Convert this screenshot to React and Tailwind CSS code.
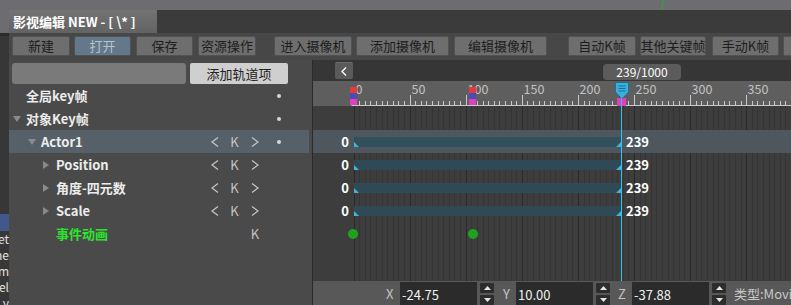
import React from 'react';

const X0 = 40.5;
const K = 1.122;
const fx = (f) => X0 + f * K;
const TL_W = 478;

const toolbar = [
  { t: '新建', c: 'ml-[3px] w-[58px]' },
  { t: '打开', c: 'ml-[4px] w-[57px]', active: true },
  { t: '保存', c: 'ml-[5px] w-[57px]' },
  { t: '资源操作', c: 'ml-[5px] w-[58px]' },
  { t: '进入摄像机', c: 'ml-[18px] w-[78px]' },
  { t: '添加摄像机', c: 'ml-[4px] w-[93px]' },
  { t: '编辑摄像机', c: 'ml-[5px] w-[93px]' },
  { t: '自动K帧', c: 'ml-[21px] w-[68px]' },
  { t: '其他关键帧', c: 'ml-[4px] w-[66px]' },
  { t: '手动K帧', c: 'ml-[6px] w-[67px]' },
  { t: '', c: 'ml-[4px] w-[30px]' },
];

const tree = [
  { label: '全局key帧', pad: 'pl-[4px]', dot: true },
  { label: '对象Key帧', pad: 'pl-[4px]', tri: 'down', dot: true },
  { label: 'Actor1', pad: 'pl-[19px]', tri: 'down', ctrl: true, dot: true, hl: true },
  { label: 'Position', pad: 'pl-[34px]', tri: 'right', ctrl: true },
  { label: '角度-四元数', pad: 'pl-[34px]', tri: 'right', ctrl: true },
  { label: 'Scale', pad: 'pl-[34px]', tri: 'right', ctrl: true },
  { label: '事件动画', pad: 'pl-[34px]', green: true, kOnly: true },
];

const Tri = ({ dir }) =>
  dir === 'down' ? (
    <svg width="8" height="6" viewBox="0 0 8 6"><polygon points="0,0 8,0 4,6" fill="#8a8a8a" /></svg>
  ) : (
    <svg width="6" height="8" viewBox="0 0 6 8"><polygon points="0,0 6,4 0,8" fill="#8a8a8a" /></svg>
  );

const Chevron = ({ left }) => (
  <svg width="8" height="10" viewBox="0 0 8 10">
    <polyline
      points={left ? '7,0.5 1,5 7,9.5' : '1,0.5 7,5 1,9.5'}
      fill="none"
      stroke="#c6c6c6"
      strokeWidth="1.2"
    />
  </svg>
);

const TreeRow = ({ r }) => (
  <div className={`flex h-[23px] w-[300px] items-center ${r.hl ? 'bg-[#566068]' : ''}`}>
    <div className={`flex w-[196px] items-center ${r.pad}`}>
      <span className="flex w-[13px] items-center">{r.tri && <Tri dir={r.tri} />}</span>
      <span className={`text-[13px] font-semibold ${r.green ? 'text-[#2ee32e]' : 'text-[#ececec]'}`}>{r.label}</span>
    </div>
    <span className="flex w-[20px] justify-center">{r.ctrl && <Chevron left />}</span>
    <span className="w-[19px] text-center text-[13px] text-[#c4c4c4]">{r.ctrl ? 'K' : ''}</span>
    <span className="flex w-[22px] justify-center text-[13px] text-[#c4c4c4]">
      {r.ctrl ? <Chevron /> : r.kOnly ? 'K' : ''}
    </span>
    <span className="flex w-[25px] justify-center">
      {r.dot && <span className="h-[4px] w-[4px] rounded-full bg-[#d6d6d6]" />}
    </span>
  </div>
);

const Ruler = () => {
  const ticks = [];
  const labels = [];
  for (let f = 0; fx(f) < TL_W; f += 5) {
    const x = Math.round(fx(f)) + 0.5;
    const major = f % 50 === 0;
    ticks.push(<line key={f} x1={x} x2={x} y1={major ? 14 : 20} y2={24} stroke="#c9c9c9" strokeWidth="1" />);
    if (major)
      labels.push(
        <text key={'l' + f} x={x + 1} y={13} fontSize="12.5" fill="#c2c2c2" fontFamily="Noto Sans CJK SC, sans-serif">{f}</text>
      );
  }
  const marker = (x, key) => (
    <g key={key}>
      <rect x={x} y={6} width={7} height={6} fill="#e23b3b" />
      <rect x={x} y={12} width={7} height={6} fill="#4a4cb6" />
      <rect x={x} y={18} width={7} height={6} fill="#e23fbf" />
    </g>
  );
  return (
    <svg width={TL_W} height="25" className="block">
      <rect width={TL_W} height="25" fill="#5e5e5e" />
      {labels}
      <line x1={fx(0) - 2} x2={TL_W} y1={24.5} y2={24.5} stroke="#c9c9c9" />
      {ticks}
      {marker(37, 'a')}
      {marker(156, 'b')}
      <rect x={304} y={17} width={9} height={8} fill="#e23fbf" />
    </svg>
  );
};

const Grid = () => {
  const lines = [];
  for (let f = 0; fx(f) < TL_W; f += 5) {
    const x = Math.round(fx(f)) + 0.5;
    lines.push(<line key={f} x1={x} x2={x} y1={0} y2={175} stroke={f % 50 === 0 ? '#2a2a2a' : '#353535'} />);
  }
  return (
    <svg width={TL_W} height="175" className="absolute inset-0">
      <rect width={TL_W} height="175" fill="#3d3d3d" />
      {lines}
    </svg>
  );
};

const BarRow = ({ hl }) => (
  <div className={`relative flex h-[23px] items-center ${hl ? 'bg-[#4e575d]' : ''}`}>
    <span className="w-[40px] pr-[4px] text-right text-[13px] font-semibold text-white">0</span>
    <div className={`relative ml-[1px] h-[10px] ${hl ? 'bg-[#31505c]' : 'bg-[#2f4a56]'}`} style={{ width: Math.round(fx(239) - fx(0)) - 1 }}>
      <svg width="5" height="5" className="absolute bottom-0 left-0"><polygon points="0,0 0,5 5,5" fill="#3db6da" /></svg>
      <svg width="5" height="5" className="absolute bottom-0 right-0"><polygon points="5,0 5,5 0,5" fill="#3db6da" /></svg>
    </div>
    <span className="ml-[5px] text-[13px] font-semibold text-white">239</span>
  </div>
);

const Spinner = () => (
  <div className="ml-[3px] flex w-[14px] shrink-0 flex-col gap-[2px] pt-[1px]">
    <div className="flex h-[10px] items-center justify-center rounded-[1px] bg-[#2d2d2d]">
      <svg width="7" height="4"><polygon points="0,4 7,4 3.5,0" fill="#e6e6e6" /></svg>
    </div>
    <div className="flex h-[10px] items-center justify-center rounded-[1px] bg-[#2d2d2d]">
      <svg width="7" height="4"><polygon points="0,0 7,0 3.5,4" fill="#e6e6e6" /></svg>
    </div>
  </div>
);

const NumInput = ({ v }) => (
  <div className="flex h-[24px] w-[77px] shrink-0 items-center bg-[#2b2b2b] pl-[2px] text-[13px] text-[#f0f0f0]">{v}</div>
);

export default function App() {
  return (
    <div className="relative flex h-[305px] w-[791px] flex-col overflow-hidden bg-[#6d6d71] font-['Noto_Sans_CJK_SC','Noto_Sans',sans-serif] leading-none">
      {/* desktop strip */}
      <div className="flex h-[10px] shrink-0">
        <div className="ml-[662px] h-[10px] w-[1px] rotate-[8deg] bg-[#22b322]" />
      </div>

      <div className="flex flex-1">
        {/* window behind, left edge */}
        <div className="flex w-[9px] shrink-0 flex-col">
          <div className="h-[23px]" />
          <div className="flex flex-1 flex-col overflow-hidden bg-[#373737]">
            <div className="h-[3px] bg-[#2b2b2b]" />
            <div className="h-[178px]" />
            <div className="h-[17px] bg-[#41598a]" />
            {['et', 'ne', 'm', 'el', 'y'].map((w) => (
              <div key={w} className="flex h-[16px] items-center justify-end overflow-hidden whitespace-nowrap text-[12px] leading-[16px] text-[#e2e2e2]">{w}</div>
            ))}
          </div>
        </div>

        {/* editor window */}
        <div className="flex w-[782px] flex-col">
          <div className="flex h-[23px] shrink-0">
            <div className="flex w-[148px] items-center bg-gradient-to-b from-[#737373] to-[#636363] pl-[4px] text-[13px] font-semibold text-white">
              影视编辑 NEW - [ \* ]
            </div>
            <div className="flex-1 bg-[#3b3b3b]" />
          </div>

          <div className="flex h-[27px] shrink-0 items-center bg-[#474747] pb-[3px] pt-[1px]">
            {toolbar.map((b, i) => (
              <div
                key={i}
                className={`flex h-[20px] shrink-0 items-center justify-center whitespace-nowrap rounded-[2px] border border-[#525252] text-[13px] ${b.c} ${
                  b.active ? 'bg-[#63788a] text-[#b6c3cc]' : 'bg-[#6e6e6e] text-[#1d1d1d]'
                }`}
              >
                {b.t}
              </div>
            ))}
          </div>

          <div className="flex h-[245px]">
            {/* track list */}
            <div className="flex w-[304px] shrink-0 flex-col border-r border-[#2a2a2a] bg-[#4a4a4a]">
              <div className="flex h-[24px] items-start pt-[3px]">
                <div className="ml-[3px] h-[21px] w-[174px] rounded-[3px] bg-[#7a7a7a]" />
                <div className="ml-[4px] flex h-[21px] w-[98px] items-center justify-center rounded-[2px] bg-[#cfcfcf] text-[13px] text-[#222]">
                  添加轨道项
                </div>
              </div>
              {tree.map((r) => (
                <TreeRow key={r.label} r={r} />
              ))}
            </div>

            {/* timeline */}
            <div className="relative flex w-[478px] flex-col">
              <div className="flex h-[21px] items-center bg-[#363636]">
                <div className="ml-[22px] flex h-[17px] w-[18px] items-center justify-center rounded-[2px] border-t border-[#6c6c6c] bg-[#5a5a5a]">
                  <svg width="6" height="9" viewBox="0 0 6 9"><polyline points="5,0.5 1,4.5 5,8.5" fill="none" stroke="#ffffff" strokeWidth="1.3" /></svg>
                </div>
                <div className="ml-[250px] mt-[2px] flex h-[16px] w-[78px] items-center justify-center rounded-[4px] bg-[#5c5c5c] text-[12px] text-white">
                  239/1000
                </div>
              </div>
              <Ruler />
              <div className="relative h-[175px] overflow-hidden">
                <Grid />
                <div className="relative flex flex-col pt-[1px]">
                  <div className="h-[23px]" />
                  <BarRow hl />
                  <BarRow />
                  <BarRow />
                  <BarRow />
                  <div className="flex h-[23px] items-center">
                    <span className="ml-[35px] h-[10px] w-[10px] rounded-full bg-[#20a120]" />
                    <span className="ml-[110px] h-[10px] w-[10px] rounded-full bg-[#20a120]" />
                  </div>
                </div>
              </div>
              <div className="flex h-[24px] items-start overflow-hidden bg-[#585858] pt-[1px] text-[13px]">
                <span className="ml-[73px] mt-[5px] w-[14px] shrink-0 text-[#c2c2c2]">X</span>
                <NumInput v="-24.75" />
                <Spinner />
                <span className="ml-[9px] mt-[5px] w-[13px] shrink-0 text-[#c2c2c2]">Y</span>
                <NumInput v="10.00" />
                <Spinner />
                <span className="ml-[8px] mt-[5px] w-[14px] shrink-0 text-[#c2c2c2]">Z</span>
                <NumInput v="-37.88" />
                <Spinner />
                <span className="ml-[8px] mt-[5px] shrink-0 whitespace-nowrap text-[#c8c8c8]">类型:Movie</span>
              </div>

              {/* playhead */}
              <svg width="14" height="18" viewBox="0 0 14 18" className="absolute left-[302px] top-[22px]">
                <polygon points="0.5,0.5 13.5,0.5 13.5,10 7,17 0.5,10" fill="#39b0dc" stroke="#1f6f8e" />
                <line x1="3.5" x2="10.5" y1="4" y2="4" stroke="#1f6f8e" />
                <line x1="3.5" x2="10.5" y1="6.5" y2="6.5" stroke="#1f6f8e" />
                <line x1="3.5" x2="10.5" y1="9" y2="9" stroke="#1f6f8e" />
              </svg>
              <div className="absolute left-[308px] top-[38px] h-[183px] w-[1px] bg-[#2ec3ee]" />
            </div>
          </div>
        </div>
      </div>
    </div>
  );
}
